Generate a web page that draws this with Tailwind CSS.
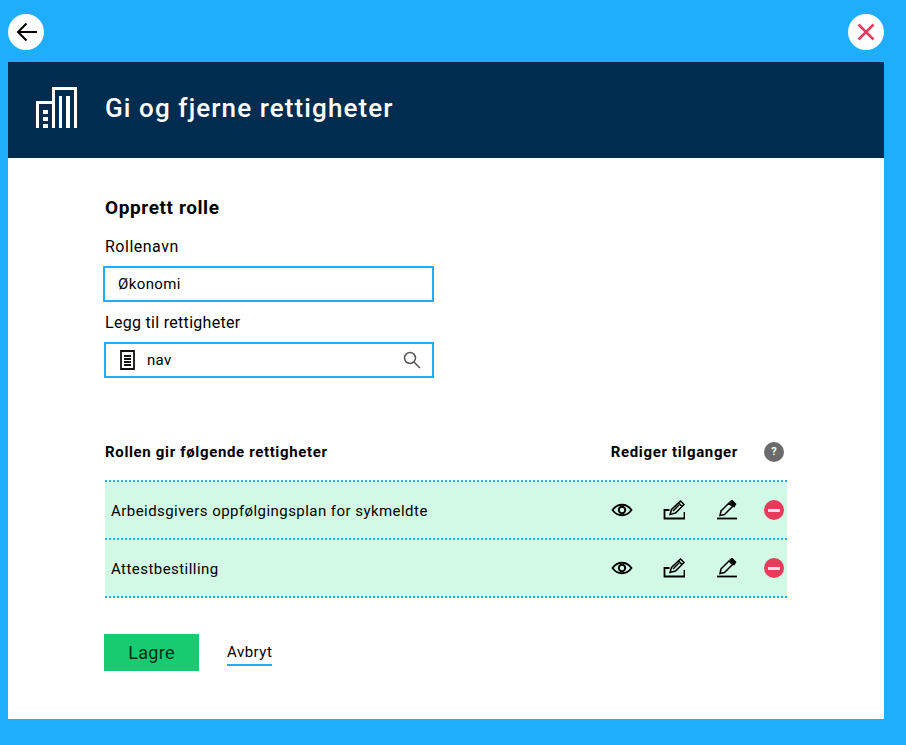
<!DOCTYPE html>
<html>
<head>
  <meta charset="utf-8">
  <title>Gi og fjerne rettigheter</title>
  <script src="https://cdn.jsdelivr.net/npm/@tailwindcss/browser@4"></script>
</head>
<body class="bg-[#1eaefb] h-[745px] overflow-hidden font-['Roboto',sans-serif] text-black">
  <div class="flex justify-between items-center h-[62px] pl-2 pr-[22px] pt-0.5">
    <button class="w-9 h-9 rounded-full bg-white flex items-center justify-center">
      <svg class="ml-px" width="22" height="20" viewBox="0 0 22 20" fill="none" stroke="#000" stroke-width="2"><path d="M21 10H2M10.500 1.500 2 10l8.500 8.500"/></svg>
    </button>
    <button class="w-9 h-9 rounded-full bg-white flex items-center justify-center">
      <svg width="18" height="18" viewBox="0 0 18 18" fill="none" stroke="#e83a5a" stroke-width="2.500"><path d="M1.500 1.500l15 15M16.500 1.500l-15 15"/></svg>
    </button>
  </div>

  <div class="ml-2 w-[876px] h-[657px] bg-white">
    <header class="h-24 bg-[#002c50] flex items-center pl-7 text-white">
      <svg class="mr-[28px] mb-[5px]" width="41" height="41" viewBox="0 0 41 41" fill="#fff">
        <path d="M16 0h25v41h-3V3H19v38h-3zM23 9h3v32h-3zM30 9h4v32h-4z"/>
        <path d="M0 14h16v3H3v24H0zM7 23h5v4H7zM7 30h5v4H7zM7 37h5v4H7z"/>
      </svg>
      <h1 class="text-[26px] font-medium tracking-[1.1px] mb-1">Gi og fjerne rettigheter</h1>
    </header>

    <main class="pl-[96px] pr-[97px]">
      <h2 class="pt-[38px] pl-px text-[19px] leading-6 font-bold tracking-[0.6px]">Opprett rolle</h2>
      <label class="block mt-[17px] pl-px text-[16px] leading-5 tracking-[0.5px]">Rollenavn</label>
      <div class="mt-[9px] -ml-px w-[331px] h-9 border-2 border-[#1eaefb] flex items-center pl-[13px] text-[15px] tracking-[0.4px]">Økonomi</div>
      <label class="block mt-[11px] pl-px text-[16px] leading-5 tracking-[0.3px]">Legg til rettigheter</label>
      <div class="mt-[9px] w-[330px] h-9 border-2 border-[#1eaefb] flex items-center pl-[14px] pr-[11px] text-[15px] tracking-[0.3px]">
        <svg class="mr-[11px]" width="16" height="20" viewBox="0 0 16 20" fill="none" stroke="#111" stroke-width="1.800"><path d="M1 1h13v18H1zM4 6h7M4 9h7M4 12h7M4 15h7"/></svg>
        <span class="flex-1">nav</span>
        <svg width="18" height="18" viewBox="0 0 18 18" fill="none" stroke="#555" stroke-width="1.500"><circle cx="7" cy="7" r="5.500"/><path d="M11 11l6 6"/></svg>
      </div>

      <div class="mt-[62px] flex items-center h-6 ml-px text-[15px] font-bold tracking-[0.65px]">
        <span class="flex-1">Rollen gir følgende rettigheter</span>
        <span class="mr-[26px]">Rediger tilganger</span>
        <span class="mr-[3px] w-5 h-5 rounded-full bg-[#6b6b6b] text-white text-[11px] tracking-normal flex items-center justify-center">?</span>
      </div>

      <div class="mt-4 ml-px border-t-2 border-dotted border-[#1eaefb]">
        <div class="h-[58px] bg-[#d2f9e5] border-b-2 border-dotted border-[#1eaefb] flex items-center pl-1.5 text-[15px] tracking-[0.45px]">
          <span class="flex-1 pt-0.5">Arbeidsgivers oppfølgingsplan for sykmeldte</span>
          <svg class="mr-[30px]" width="22" height="14" viewBox="0 0 22 14" fill="none" stroke="#000" stroke-width="1.800"><path d="M1.500 7c5-7 14-7 19 0-5 7-14 7-19 0z"/><circle cx="11" cy="7" r="3.200" stroke-width="2"/></svg>
          <svg class="mr-[32px]" width="22" height="20" viewBox="0 0 22 20" fill="none" stroke="#000" stroke-width="1.500"><path d="M6.500 10H1.500v8.500h20V12" stroke-width="1.800"/><path d="M7 14.500l1.500-5L17.500 1 21 4.500 12.500 13zM15.500 3L19 6.500M10 11l6-6"/></svg>
          <svg class="mr-[27px]" width="20" height="20" viewBox="0 0 20 20" fill="none" stroke="#000" stroke-width="1.500"><path d="M0 18.500h20" stroke-width="1.800"/><path d="M3 15.500l1-4.500L12 3l3.500 3.500-8 8z"/><path d="M13 2l2-1.500L18.500 4 17 6.500z" fill="#000"/></svg>
          <span class="mr-[3px] w-5 h-5 rounded-full bg-[#e83a5a] flex items-center justify-center"><span class="w-3 h-[3px] bg-white/85"></span></span>
        </div>
        <div class="h-[58px] bg-[#d2f9e5] border-b-2 border-dotted border-[#1eaefb] flex items-center pl-1.5 text-[15px] tracking-[0.45px]">
          <span class="flex-1 pt-0.5">Attestbestilling</span>
          <svg class="mr-[30px]" width="22" height="14" viewBox="0 0 22 14" fill="none" stroke="#000" stroke-width="1.800"><path d="M1.500 7c5-7 14-7 19 0-5 7-14 7-19 0z"/><circle cx="11" cy="7" r="3.200" stroke-width="2"/></svg>
          <svg class="mr-[32px]" width="22" height="20" viewBox="0 0 22 20" fill="none" stroke="#000" stroke-width="1.500"><path d="M6.500 10H1.500v8.500h20V12" stroke-width="1.800"/><path d="M7 14.500l1.500-5L17.500 1 21 4.500 12.500 13zM15.500 3L19 6.500M10 11l6-6"/></svg>
          <svg class="mr-[27px]" width="20" height="20" viewBox="0 0 20 20" fill="none" stroke="#000" stroke-width="1.500"><path d="M0 18.500h20" stroke-width="1.800"/><path d="M3 15.500l1-4.500L12 3l3.500 3.500-8 8z"/><path d="M13 2l2-1.500L18.500 4 17 6.500z" fill="#000"/></svg>
          <span class="mr-[3px] w-5 h-5 rounded-full bg-[#e83a5a] flex items-center justify-center"><span class="w-3 h-[3px] bg-white/85"></span></span>
        </div>
      </div>

      <div class="mt-9 flex items-center">
        <button class="w-[95px] h-[37px] bg-[#19cb70] text-[18px] tracking-[0.3px] text-[#0b2a1a]">Lagre</button>
        <a class="ml-7 mt-0.5 text-[15px] leading-5 tracking-[0.5px] border-b-2 border-[#1eaefb] pb-0.5">Avbryt</a>
      </div>
    </main>
  </div>
</body>
</html>
